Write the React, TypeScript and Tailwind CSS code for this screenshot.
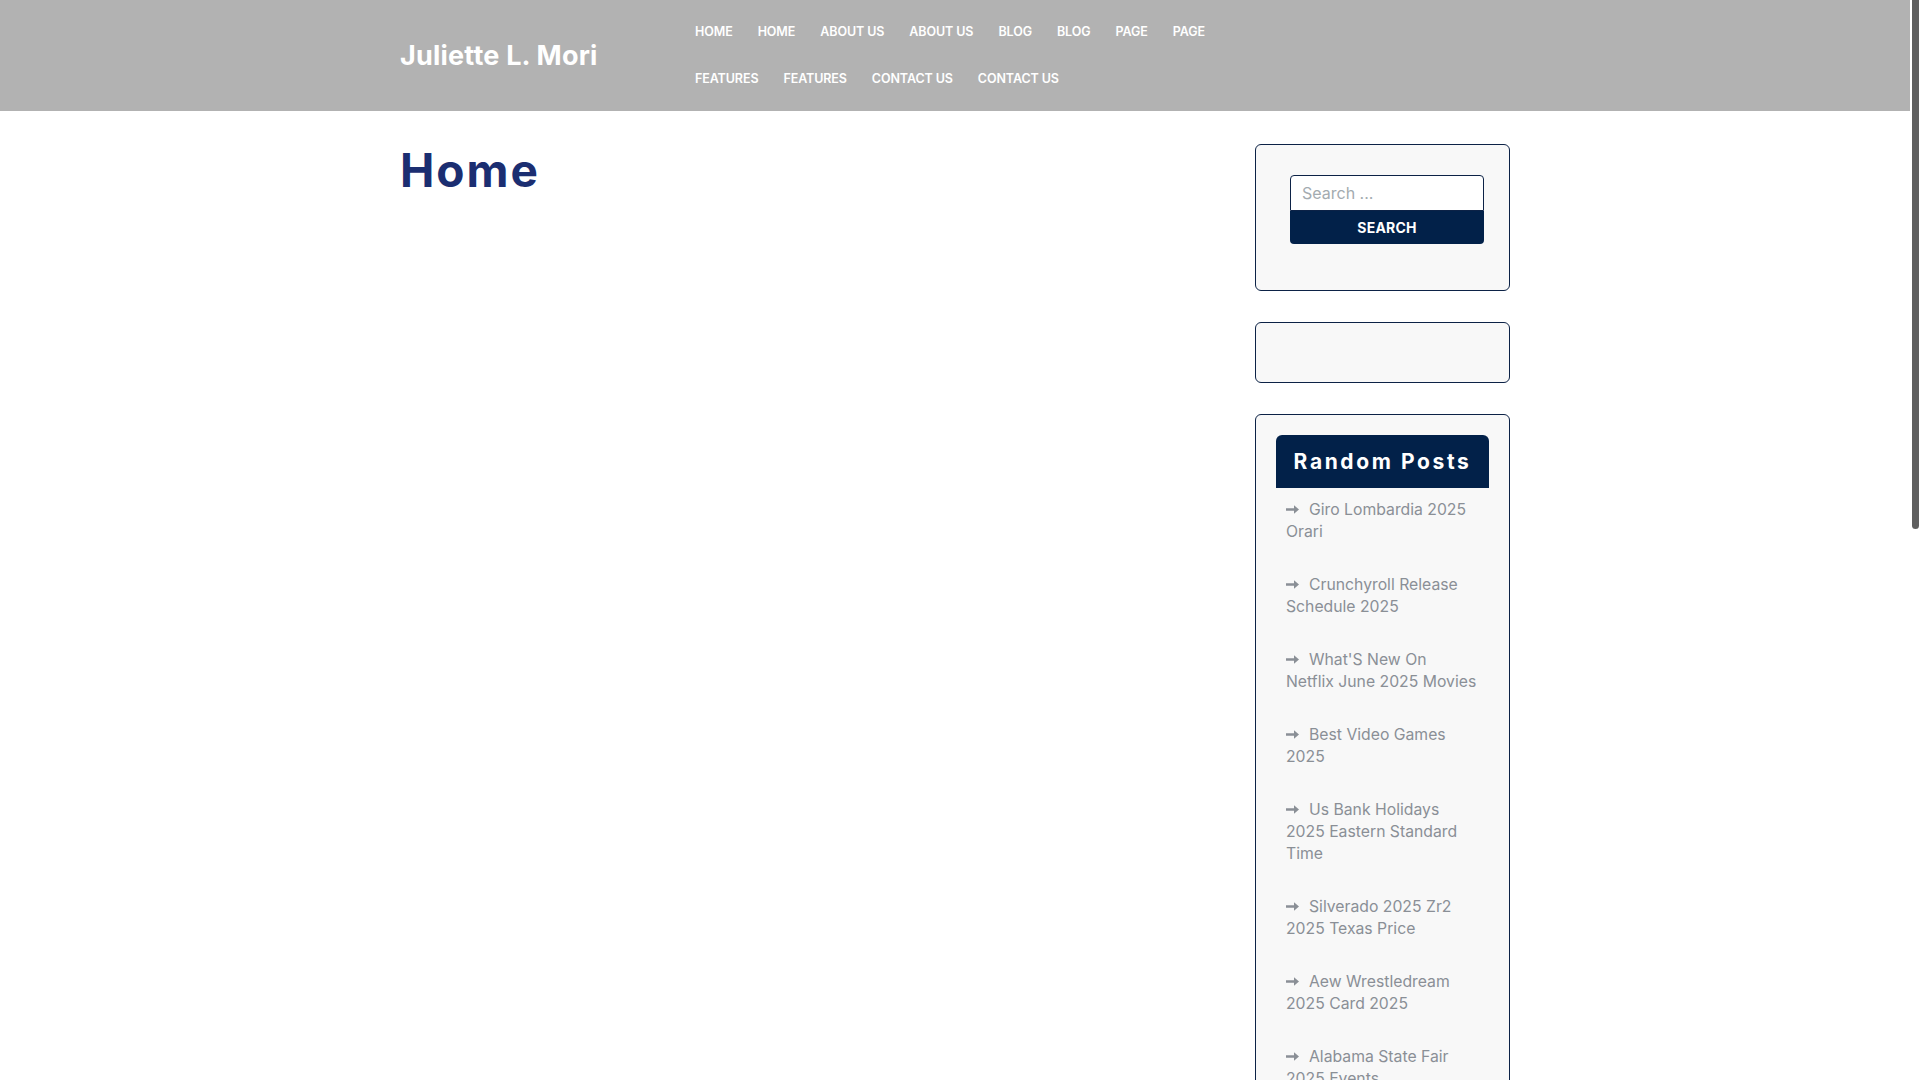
import React from "react";

const font = { fontFamily: "Inter, 'Noto Sans', 'DejaVu Sans', sans-serif" };

function Arrow() {
  return (
    <svg width="13" height="9" viewBox="0 0 13 9" className="inline-block mr-[10px] align-middle -mt-[3px]" aria-hidden>
      <path d="M0 3.2h8V0.3L13 4.5 8 8.7V5.8H0z" fill="#8a8f96" />
    </svg>
  );
}

const posts: string[][] = [
  ["Giro Lombardia 2025", "Orari"],
  ["Crunchyroll Release", "Schedule 2025"],
  ["What'S New On", "Netflix June 2025 Movies"],
  ["Best Video Games", "2025"],
  ["Us Bank Holidays", "2025 Eastern Standard", "Time"],
  ["Silverado 2025 Zr2", "2025 Texas Price"],
  ["Aew Wrestledream", "2025 Card 2025"],
  ["Alabama State Fair", "2025 Events"],
];

export default function App() {
  const row1 = ["HOME", "HOME", "ABOUT US", "ABOUT US", "BLOG", "BLOG", "PAGE", "PAGE"];
  const row2 = ["FEATURES", "FEATURES", "CONTACT US", "CONTACT US"];
  return (
    <div style={font} className="h-screen overflow-hidden bg-white flex">
      <div className="flex-1 min-w-0">
        <header className="h-[111px] bg-[#b2b2b2]">
          <div className="mx-auto w-[1110px] h-full flex">
            <div className="w-[295px] flex items-center">
              <span className="text-white font-bold text-[27px] leading-none tracking-[0.2px]">Juliette L. Mori</span>
            </div>
            <nav className="pt-[9px] flex flex-col">
              <div className="flex gap-[25px] h-[47px] items-center">
                {row1.map((t, i) => (
                  <span key={i} className="text-white font-semibold text-[12.5px] tracking-[-0.1px]">{t}</span>
                ))}
              </div>
              <div className="flex gap-[25px] h-[47px] items-center">
                {row2.map((t, i) => (
                  <span key={i} className="text-white font-semibold text-[12.5px] tracking-[-0.1px]">{t}</span>
                ))}
              </div>
            </nav>
          </div>
        </header>

        <div className="mx-auto w-[1110px] flex pt-[33px]">
          <main className="w-[855px]">
            <h1 className="mt-[3px] text-[46px] leading-none font-bold text-[#1b2e71] tracking-[2px]">Home</h1>
          </main>

          <aside className="w-[255px] flex flex-col gap-[31px]">
            <div className="h-[147px] border border-[#0c2246] rounded-[6px] bg-[#f8f8f8] pt-[30px] pl-[34px] pr-[25px]">
              <div className="h-[36px] bg-white border border-[#0c2246] rounded-t-[4px] flex items-center px-[11px]">
                <span className="text-[16px] text-[#a3abb0]">Search ...</span>
              </div>
              <div className="h-[33px] bg-[#022149] rounded-b-[4px] flex items-center justify-center">
                <span className="text-white font-bold text-[14px] tracking-[0.2px]">SEARCH</span>
              </div>
            </div>

            <div className="h-[61px] border border-[#0c2246] rounded-[6px] bg-[#f8f8f8]" />

            <div className="border border-[#0c2246] rounded-[6px] bg-[#f8f8f8] pt-[20px] px-[20px] pb-[20px]">
              <div className="h-[53px] bg-[#022149] rounded-t-[6px] flex items-center justify-center">
                <span className="text-white font-bold text-[21px] tracking-[2.6px]">Random Posts</span>
              </div>
              <ul className="pt-[11px] px-[10px]">
                {posts.map((lines, i) => (
                  <li key={i} className="pb-[31px] text-[15.75px] leading-[22px] text-[#8a8f96]">
                    {lines.map((l, j) => (
                      <span key={j} className="block whitespace-nowrap">
                        {j === 0 && <Arrow />}
                        {l}
                      </span>
                    ))}
                  </li>
                ))}
              </ul>
            </div>
          </aside>
        </div>
      </div>
      <div className="w-[10px] bg-white flex justify-center" aria-hidden>
        <div className="w-[7px] h-[529px] bg-[#5f5f5f] rounded-b-full" />
      </div>
    </div>
  );
}
